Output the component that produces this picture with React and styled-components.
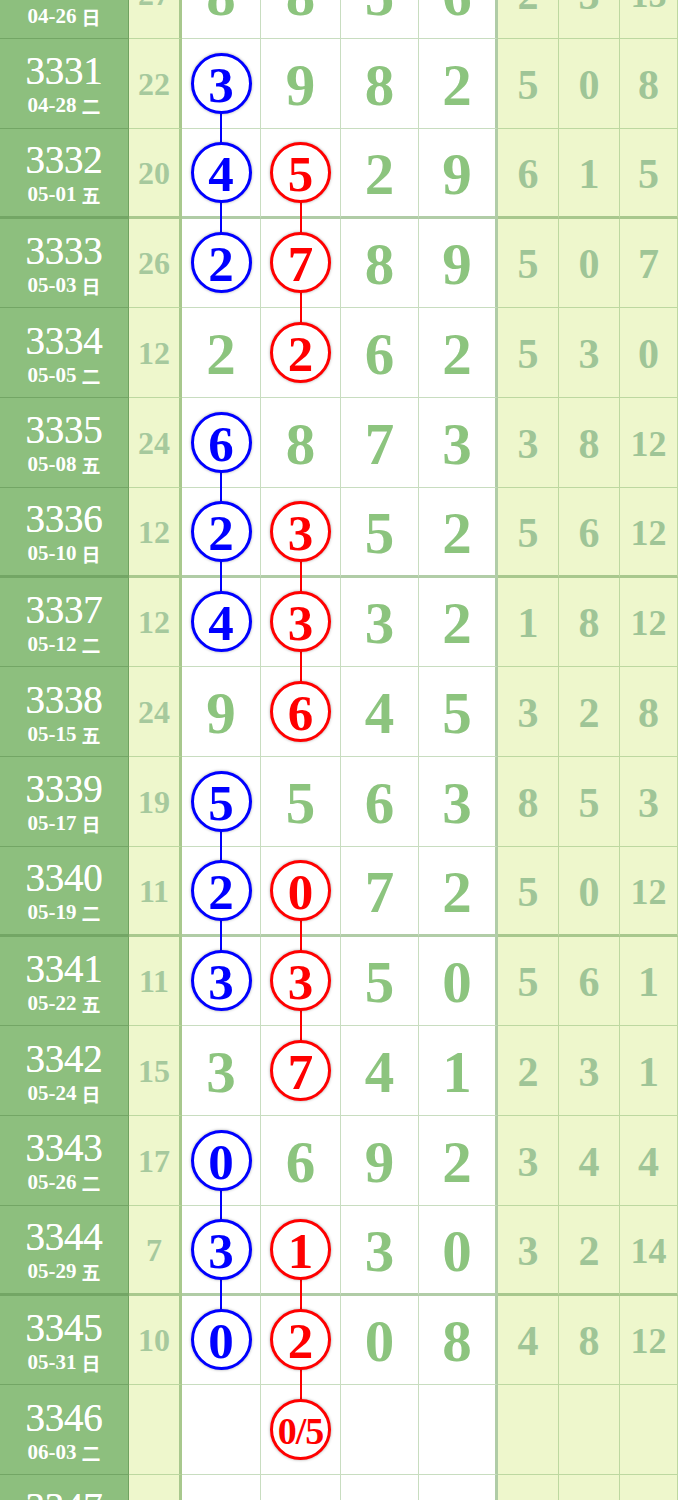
import React from 'react';
import styled, { createGlobalStyle, css } from 'styled-components';

const GlobalStyle = createGlobalStyle`
  html, body {
    margin: 0;
    padding: 0;
    background: #fff;
  }
  body {
    font-family: "Liberation Serif", "Noto Sans CJK SC", serif;
    overflow: hidden;
  }
`;

const LINE = 'rgba(110, 165, 90, 0.38)';
const ROW_H = 89.75;

// issue, date, weekday, sum, four digits, three right values, blue col, red col
const rows = [
  { no: 3330, date: '04-26', day: '日', sum: 27, d: [8, 8, 5, 6], r: [2, 3, 13] },
  { no: 3331, date: '04-28', day: '二', sum: 22, d: [3, 9, 8, 2], r: [5, 0, 8], b: true },
  { no: 3332, date: '05-01', day: '五', sum: 20, d: [4, 5, 2, 9], r: [6, 1, 5], b: true, red: true },
  { no: 3333, date: '05-03', day: '日', sum: 26, d: [2, 7, 8, 9], r: [5, 0, 7], b: true, red: true },
  { no: 3334, date: '05-05', day: '二', sum: 12, d: [2, 2, 6, 2], r: [5, 3, 0], red: true },
  { no: 3335, date: '05-08', day: '五', sum: 24, d: [6, 8, 7, 3], r: [3, 8, 12], b: true },
  { no: 3336, date: '05-10', day: '日', sum: 12, d: [2, 3, 5, 2], r: [5, 6, 12], b: true, red: true },
  { no: 3337, date: '05-12', day: '二', sum: 12, d: [4, 3, 3, 2], r: [1, 8, 12], b: true, red: true },
  { no: 3338, date: '05-15', day: '五', sum: 24, d: [9, 6, 4, 5], r: [3, 2, 8], red: true },
  { no: 3339, date: '05-17', day: '日', sum: 19, d: [5, 5, 6, 3], r: [8, 5, 3], b: true },
  { no: 3340, date: '05-19', day: '二', sum: 11, d: [2, 0, 7, 2], r: [5, 0, 12], b: true, red: true },
  { no: 3341, date: '05-22', day: '五', sum: 11, d: [3, 3, 5, 0], r: [5, 6, 1], b: true, red: true },
  { no: 3342, date: '05-24', day: '日', sum: 15, d: [3, 7, 4, 1], r: [2, 3, 1], red: true },
  { no: 3343, date: '05-26', day: '二', sum: 17, d: [0, 6, 9, 2], r: [3, 4, 4], b: true },
  { no: 3344, date: '05-29', day: '五', sum: 7, d: [3, 1, 3, 0], r: [3, 2, 14], b: true, red: true },
  { no: 3345, date: '05-31', day: '日', sum: 10, d: [0, 2, 0, 8], r: [4, 8, 12], b: true, red: true },
  { no: 3346, date: '06-03', day: '二', sum: '', d: ['', '0/5', '', ''], r: ['', '', ''], red: true, pending: true },
  { no: 3347, date: '06-05', day: '日', sum: '', d: ['', '', '', ''], r: ['', '', ''] },
];

const Table = styled.div`
  margin-top: -50.75px;
  width: 678px;
`;

const Row = styled.div`
  display: grid;
  grid-template-columns: 129px 53px 79px 80px 78px 79px 61px 61px 58px;
  height: ${ROW_H}px;
`;

const Cell = styled.div`
  position: relative;
  box-sizing: border-box;
  display: flex;
  align-items: center;
  justify-content: center;
  border-bottom: ${p => (p.$thick ? 3 : 1)}px solid ${p => (p.$thick ? 'rgba(100, 155, 80, 0.5)' : LINE)};
  border-right: ${p => p.$edge || 1}px solid ${p => (p.$edge ? 'rgba(100, 155, 80, 0.5)' : LINE)};
  background: ${p => p.$bg || '#fff'};
`;

const IssueCell = styled(Cell)`
  flex-direction: column;
  background: #8dbf7e;
  border-bottom-color: rgba(70, 120, 55, 0.35);
  border-right-color: rgba(70, 120, 55, 0.4);
  color: #fff;
  gap: 5px;
  padding-top: 1px;
`;

const IssueNo = styled.div`
  font-size: 39px;
  line-height: 1;
  letter-spacing: -0.3px;
  text-shadow: 0 0 0.4px #fff;
`;

const IssueDate = styled.div`
  font-size: 21px;
  line-height: 1;
  font-weight: 700;
  display: flex;
  gap: 5px;
  align-items: center;
`;

const Weekday = styled.span`
  font-family: "Noto Sans CJK SC", sans-serif;
  font-size: 19px;
  line-height: 1;
  font-weight: 700;
`;

const SumCell = styled(Cell)`
  background: #eef7cc;
  color: #a6c99d;
  font-weight: 700;
  font-size: 32px;
  padding-top: 2px;
`;

const Digit = styled.span`
  font-weight: 700;
  font-size: 59px;
  color: #8cc47e;
  padding-top: 4px;
`;

const RightCell = styled(Cell)`
  background: #eef7cc;
  color: #9fc597;
  font-weight: 700;
  font-size: ${p => (p.$wide ? 36 : 42)}px;
  padding-top: 3px;
`;

const TrackCell = styled(Cell)`
  ${p =>
    p.$up &&
    css`
      &::before {
        content: '';
        position: absolute;
        left: calc(50% - 1px);
        top: 0;
        height: 50%;
        width: 2px;
        background: ${p.$color};
        z-index: 1;
      }
    `}
  ${p =>
    p.$down &&
    css`
      &::after {
        content: '';
        position: absolute;
        left: calc(50% - 1px);
        top: 50%;
        bottom: -${p.$thick ? 3 : 1}px;
        width: 2px;
        background: ${p.$color};
        z-index: 1;
      }
    `}
`;

const Ball = styled.div`
  position: relative;
  z-index: 2;
  box-sizing: border-box;
  width: 61px;
  height: 61px;
  border-radius: 50%;
  border: 3px solid ${p => p.$color};
  background: #fff;
  box-shadow: 0 0 3px rgba(0, 0, 0, 0.35);
  color: ${p => p.$color};
  display: flex;
  align-items: center;
  justify-content: center;
  font-weight: 700;
  font-size: ${p => (p.$small ? 38 : 51)}px;
  letter-spacing: ${p => (p.$small ? '-1px' : 0)};
  padding-top: 3px;
`;

const BLUE = '#0000ff';
const RED = '#ff0000';

const isGroupEnd = no => (no - 3328) % 4 === 0;

function App() {
  return (
    <>
      <GlobalStyle />
      <Table>
        {rows.map((row, i) => {
          const prev = rows[i - 1] || {};
          const next = rows[i + 1] || {};
          const thick = isGroupEnd(row.no);
          return (
            <Row key={row.no}>
              <IssueCell $thick={thick}>
                <IssueNo>{row.no}</IssueNo>
                <IssueDate>
                  {row.date}
                  <Weekday>{row.day}</Weekday>
                </IssueDate>
              </IssueCell>
              <SumCell $thick={thick} $edge={3}>{row.sum}</SumCell>
              <TrackCell
                $thick={thick}
                $color={BLUE}
                $up={row.b && prev.b}
                $down={row.b && next.b}
              >
                {row.b ? <Ball $color={BLUE}>{row.d[0]}</Ball> : <Digit>{row.d[0]}</Digit>}
              </TrackCell>
              <TrackCell
                $thick={thick}
                $color={RED}
                $up={row.red && prev.red}
                $down={row.red && next.red}
              >
                {row.red ? (
                  <Ball $color={RED} $small={row.pending}>{row.d[1]}</Ball>
                ) : (
                  <Digit>{row.d[1]}</Digit>
                )}
              </TrackCell>
              <Cell $thick={thick}><Digit>{row.d[2]}</Digit></Cell>
              <Cell $thick={thick} $edge={3}><Digit>{row.d[3]}</Digit></Cell>
              {row.r.map((v, k) => (
                <RightCell key={k} $thick={thick} $wide={String(v).length > 1}>
                  {v}
                </RightCell>
              ))}
            </Row>
          );
        })}
      </Table>
    </>
  );
}

export default App;
